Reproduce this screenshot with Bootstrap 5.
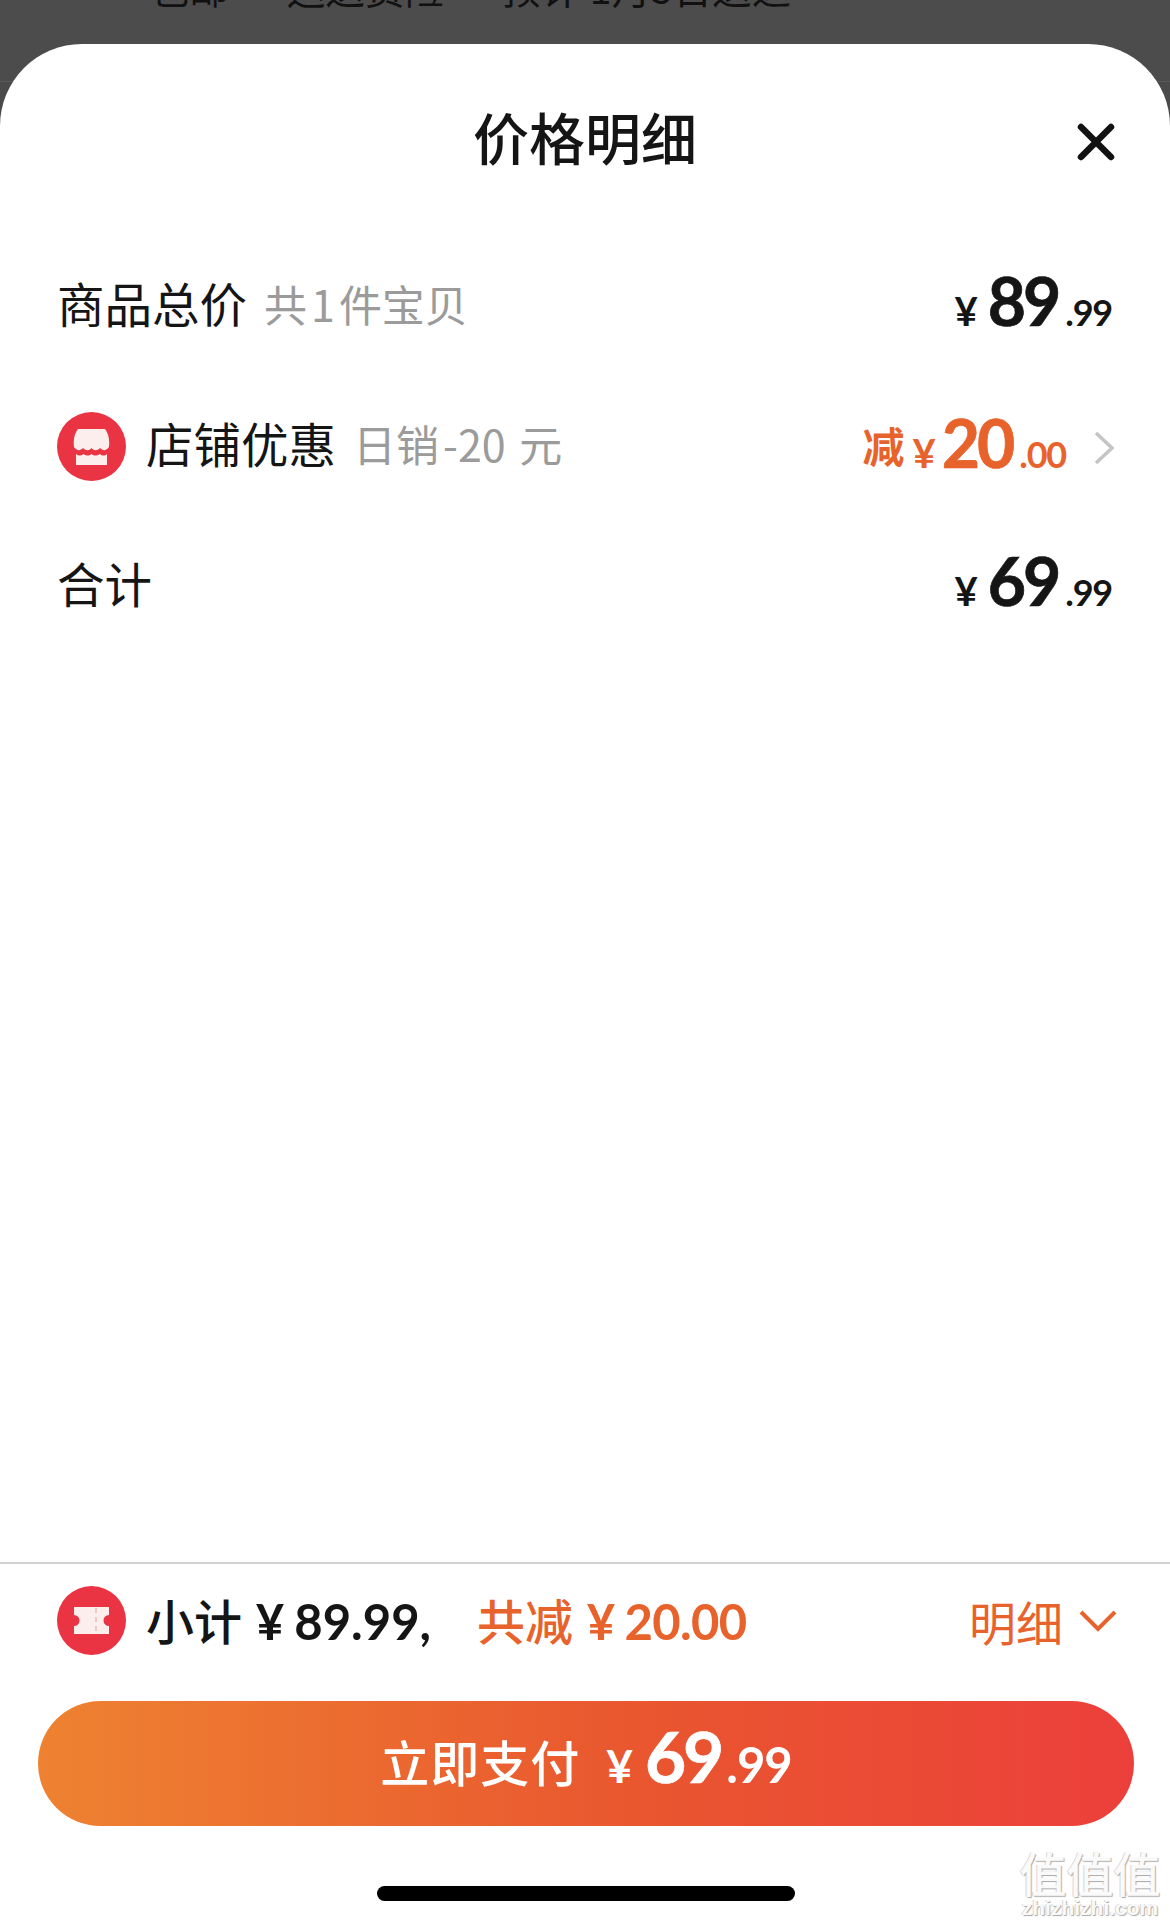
<!DOCTYPE html>
<html lang="zh">
<head>
  <meta charset="UTF-8">
  <meta name="viewport" content="width=device-width, initial-scale=1.0">
  <title>价格明细</title>
  <link href="https://cdn.jsdelivr.net/npm/bootstrap@5.3.2/dist/css/bootstrap.min.css" rel="stylesheet">
  <style>
    html, body { height: 100%; }
    body {
      width: 1170px;
      height: 1925px;
      overflow: hidden;
      background: linear-gradient(#4c4c4c 81px, #5a5a5a 81px, #5a5a5a 82px, #4a4a4a 82px);
      color: #151515;
      font-family: "Noto Sans CJK SC", "Liberation Sans", sans-serif;
    }
    .behind-strip {
      height: 44px;
      overflow: hidden;
      padding-left: 150px;
      font-size: 39px;
      letter-spacing: .4px;
      line-height: 44px;
      color: #111;
      white-space: nowrap;
    }
    .behind-strip span { display: block; margin-top: -35px; }
    .sheet {
      height: 1881px;
      background: #fff;
      border-radius: 82px 82px 0 0;
    }
    .sheet-head { height: 160px; padding-top: 24px; }
    .sheet-title { font-size: 56px; font-weight: 500; line-height: 1; margin: 0; }
    .close-x { position: absolute; right: 54px; top: 78px; }
    .rows { padding: 29px 58px 0 57px; }
    .price-row { height: 140px; }
    .row-name { font-size: 47.5px; line-height: 1; }
    .row-sub { font-size: 43px; line-height: 1; color: #9b9b9b; margin-left: 17px; }
    .row-digit { margin: 0 4px; }
    .round-ico { width: 69px; height: 69px; margin-right: 20px; flex: none; }
    .store-ico { margin-top: 7px; }
    .amt {
      font-family: "Lato", "Liberation Sans", sans-serif;
      font-weight: 700;
      line-height: 1;
      display: flex;
      align-items: baseline;
      margin-bottom: 4px;
    }
    .amt-yen { font-size: 40px; margin-right: 10px; }
    .amt-big { font-size: 66px; letter-spacing: -3px; -webkit-text-stroke: .7px currentColor; }
    .amt-cents { font-size: 36px; font-weight: 700; margin-left: 7px; letter-spacing: -1.2px; }
    .amt-cut { margin-bottom: 0; }
    .amt-cut .amt-yen { margin-right: 6px; }
    .tone-orange { color: #e8622c; }
    .cut-label { font-family: "Noto Sans CJK SC", sans-serif; font-size: 42px; font-weight: 700; margin-right: 8px; align-self: center; margin-top: 4px; }
    .chev { margin-left: 28px; margin-right: -2px; margin-top: 10px; align-self: center; }
    .foot { border-top: 2px solid #d2d2d2; padding: 0 36px 0 38px; }
    .foot-summary { height: 137px; padding: 0 17px 24px 19px; }
    .sum-text { font-size: 48px; font-weight: 500; line-height: 1; white-space: nowrap; }
    .sum-text b { font-family: "Lato", sans-serif; font-weight: 700; font-size: 49px; }
    .sum-text .sum-yen { margin: 0 10px 0 3px; }
    .sum-cut { margin-left: 46px; }
    .sum-cut b { letter-spacing: -.7px; }
    .detail-link { font-size: 47px; line-height: 1; }
    .pay-btn {
      height: 125px;
      width: 100%;
      border: 0;
      border-radius: 63px;
      padding-bottom: 12px;
      background: linear-gradient(90deg, #ee8231, #e9562f 55%, #ec3f3b);
      color: #fff;
    }
    .pay-btn:hover, .pay-btn:active { background: linear-gradient(90deg, #ee8231, #e9562f 55%, #ec3f3b); color: #fff; }
    .pay-label { font-size: 49px; font-weight: 500; letter-spacing: 1px; margin-right: 26px; }
    .pay-btn .amt { margin-bottom: 10px; }
    .pay-btn .amt-yen { font-size: 46px; margin-right: 12px; }
    .pay-btn .amt-big { font-size: 71px; letter-spacing: -3px; }
    .pay-btn .amt-cents { font-size: 49px; font-weight: 700; margin-left: 5px; letter-spacing: -1px; }
    .home-bar { width: 418px; height: 15px; background: #000; border-radius: 8px; margin: 60px auto 0; }
    .foot-gap { height: 24px; }
    .watermark {
      position: absolute;
      right: 9px;
      bottom: 6px;
      width: 142px;
      text-align: center;
      color: #fafafa;
      text-shadow: 1px 1px 1px #a8a8a8, -1px 0 0 #d8d8d8;
      line-height: 1;
    }
    .wm-top { font-size: 47px; font-weight: 500; white-space: nowrap; line-height: 49px; }
    .wm-url { font-family: "Liberation Sans", sans-serif; font-weight: 700; font-size: 21px; line-height: 22px; margin-top: 1px; }
  </style>
</head>
<body class="position-relative">
  <div class="behind-strip"><span>包邮 · 运送费险 · 预计 1月5日送达</span></div>

  <div class="sheet d-flex flex-column position-relative">
    <header class="sheet-head d-flex justify-content-center align-items-center position-relative">
      <h1 class="sheet-title">价格明细</h1>
      <svg class="close-x" width="40" height="40" viewBox="0 0 40 40"><path d="M5 5 35 35M35 5 5 35" stroke="#111" stroke-width="6.500" stroke-linecap="round" fill="none"/></svg>
    </header>

    <div class="rows flex-grow-1">
      <div class="price-row d-flex align-items-center justify-content-between">
        <div class="d-flex align-items-center">
          <span class="row-name">商品总价</span><span class="row-sub">共<span class="row-digit">1</span>件宝贝</span>
        </div>
        <div class="amt"><span class="amt-yen">¥</span><span class="amt-big">89</span><span class="amt-cents">.99</span></div>
      </div>

      <div class="price-row d-flex align-items-center justify-content-between">
        <div class="d-flex align-items-center">
          <svg class="round-ico store-ico" viewBox="0 0 69 69">
            <circle cx="34.5" cy="34.5" r="34.5" fill="#ea3343"/>
            <path d="M21 17H48C51 21 53 27 52 35 49 39 46 39 43 36 40 39 37 39 34.500 36 32 39 29 39 26 36 23 39 20 39 17 35 16 27 18 21 21 17Z" fill="#fbeeec"/>
            <path d="M19 42C22 44 24 44 26.500 42 29 44 32 44 34.500 42 37 44 40 44 43 42 45 44 48 44 50 42V53H19Z" fill="#fbeeec"/>
          </svg>
          <span class="row-name">店铺优惠</span><span class="row-sub">日销<span class="row-digit">-20</span> 元</span>
        </div>
        <div class="amt amt-cut tone-orange">
          <span class="cut-label">减</span><span class="amt-yen">¥</span><span class="amt-big">20</span><span class="amt-cents">.00</span>
          <svg class="chev" width="20" height="34" viewBox="0 0 20 34"><path d="M2 2 18 17 2 32" stroke="#c4c4c4" stroke-width="3.500" fill="none"/></svg>
        </div>
      </div>

      <div class="price-row d-flex align-items-center justify-content-between">
        <span class="row-name">合计</span>
        <div class="amt"><span class="amt-yen">¥</span><span class="amt-big">69</span><span class="amt-cents">.99</span></div>
      </div>
    </div>

    <footer class="foot">
      <div class="foot-summary d-flex align-items-center justify-content-between">
        <div class="d-flex align-items-center">
          <svg class="round-ico" viewBox="0 0 69 69">
            <circle cx="34.5" cy="34.5" r="34.5" fill="#ea3343"/>
            <path d="M17 21H52V29A5.500 5.500 0 0 0 52 40V48H17V40A5.500 5.500 0 0 0 17 29Z" fill="#fbeeec"/>
            <path d="M39 22V47" stroke="#f2c9c0" stroke-width="2" stroke-dasharray="5 4" fill="none"/>
          </svg>
          <span class="sum-text">小计 <b class="sum-yen">¥</b><b>89.99,</b></span>
          <span class="sum-text tone-orange sum-cut">共减 <b class="sum-yen">¥</b><b>20.00</b></span>
        </div>
        <div class="d-flex align-items-center tone-orange">
          <span class="detail-link">明细</span>
          <svg class="ms-3" width="38" height="24" viewBox="0 0 38 24"><path d="M2 3 19 20 36 3" stroke="#e8622c" stroke-width="4" fill="none"/></svg>
        </div>
      </div>

      <button type="button" class="btn pay-btn d-flex align-items-center justify-content-center">
        <span class="pay-label">立即支付</span>
        <span class="amt"><span class="amt-yen">¥</span><span class="amt-big">69</span><span class="amt-cents">.99</span></span>
      </button>

      <div class="home-bar"></div>
      <div class="foot-gap"></div>
    </footer>
  </div>

  <div class="watermark">
    <div class="wm-top">值值值</div>
    <div class="wm-url">zhizhizhi.com</div>
  </div>

  <script src="https://cdn.jsdelivr.net/npm/bootstrap@5.3.2/dist/js/bootstrap.bundle.min.js"></script>
</body>
</html>
